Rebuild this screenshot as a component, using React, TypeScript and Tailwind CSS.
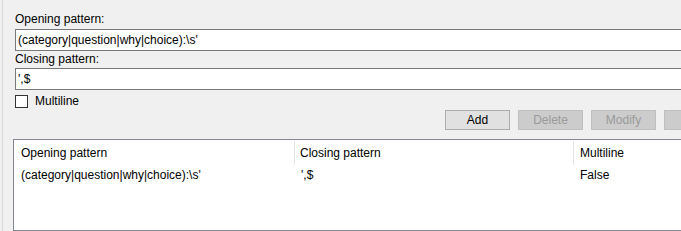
import React from 'react';

function Btn({ label, disabled = false }: { label: string; disabled?: boolean }) {
  return (
    <div
      className={
        disabled
          ? 'w-[65px] h-[20px] shrink-0 flex items-center justify-center border border-[#bfbfbf] bg-[#cccccc] text-[#9a9a9a]'
          : 'w-[65px] h-[20px] shrink-0 flex items-center justify-center border border-[#adadad] bg-[#e1e1e1] text-black'
      }
    >
      {label}
    </div>
  );
}

export default function App() {
  return (
    <div className="w-[681px] h-[231px] bg-[#f0f0f0] overflow-hidden flex text-[12px] text-black font-['Liberation_Sans',Arial,sans-serif]">
      {/* splitter edge */}
      <div className="w-[2px] shrink-0" />
      <div className="w-px shrink-0 bg-[#d9d9d9]" />

      <div className="flex flex-col flex-1 min-w-0">
        <div className="pl-[12px] pt-[11px] flex flex-col">
          <div className="h-[16px] leading-[16px]">Opening pattern:</div>
          <div className="mt-[2px] w-[700px] h-[22px] border border-[#7a7a7a] bg-white pl-[2px] leading-[20px] whitespace-nowrap">
            (category|question|why|choice):\s'
          </div>
          <div className="h-[16px] leading-[16px]">Closing pattern:</div>
          <div className="mt-[1px] w-[700px] h-[22px] border border-[#7a7a7a] bg-white pl-[2px] leading-[20px] whitespace-nowrap">
            ',$
          </div>
          <div className="mt-[5px] flex items-center h-[13px]">
            <div className="w-[13px] h-[13px] border border-[#333333] bg-white" />
            <span className="ml-[7px] leading-[13px]">Multiline</span>
          </div>
        </div>

        <div className="mt-[2px] pl-[442px] flex gap-[8px] whitespace-nowrap">
          <Btn label="Add" />
          <Btn label="Delete" disabled />
          <Btn label="Modify" disabled />
          <Btn label="" disabled />
        </div>

        {/* list view */}
        <div className="mt-[9px] ml-[10px] w-[700px] h-[120px] border border-[#828790] bg-white whitespace-nowrap">
          <div className="flex h-[24px] mt-[1px]">
            <div className="w-[281px] flex items-center pl-[7px] border-r border-[#e5e5e5]">Opening pattern</div>
            <div className="w-[279px] flex items-center pl-[5px] border-r border-[#e5e5e5]">Closing pattern</div>
            <div className="flex items-center pl-[6px]">Multiline</div>
          </div>
          <div className="flex h-[19px] items-center">
            <div className="w-[281px] pl-[7px]">(category|question|why|choice):\s'</div>
            <div className="w-[279px] pl-[6px]">',$</div>
            <div className="pl-[6px]">False</div>
          </div>
        </div>
      </div>
    </div>
  );
}
